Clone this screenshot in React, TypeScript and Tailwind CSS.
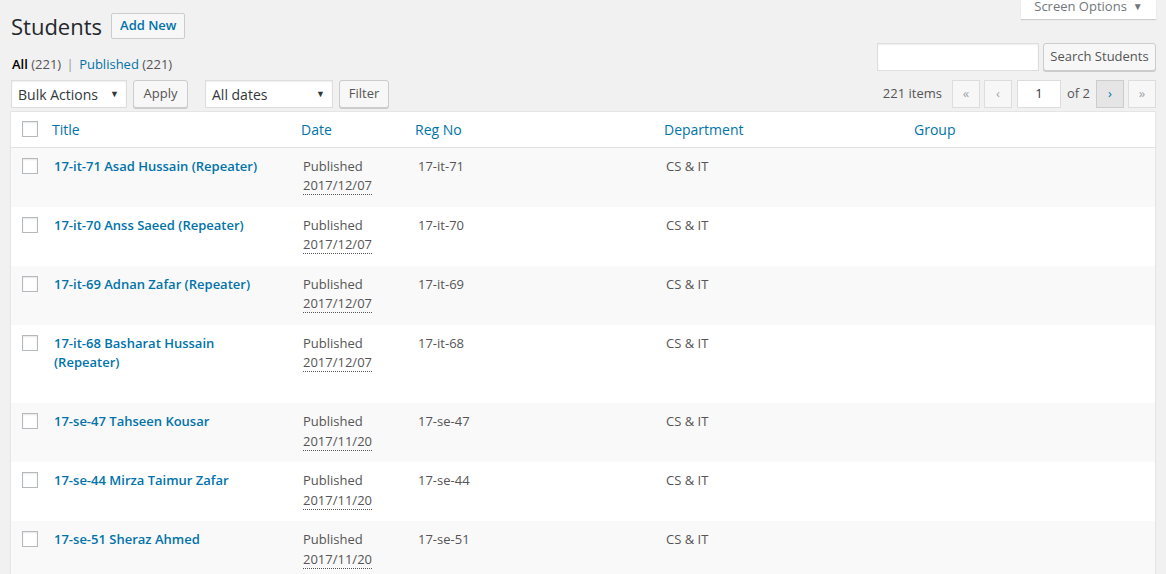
import React from "react";

const rows = [
  { title: "17-it-71 Asad Hussain (Repeater)", date: "2017/12/07", reg: "17-it-71" },
  { title: "17-it-70 Anss Saeed (Repeater)", date: "2017/12/07", reg: "17-it-70" },
  { title: "17-it-69 Adnan Zafar (Repeater)", date: "2017/12/07", reg: "17-it-69" },
  { title: "17-it-68 Basharat Hussain (Repeater)", date: "2017/12/07", reg: "17-it-68" },
  { title: "17-se-47 Tahseen Kousar", date: "2017/11/20", reg: "17-se-47" },
  { title: "17-se-44 Mirza Taimur Zafar", date: "2017/11/20", reg: "17-se-44" },
  { title: "17-se-51 Sheraz Ahmed", date: "2017/11/20", reg: "17-se-51" },
];

function Checkbox() {
  return (
    <span className="block w-4 h-4 bg-white border border-[#b4b9be] shadow-[inset_0_1px_2px_rgba(0,0,0,0.1)]" />
  );
}

function Select({ label, w }: { label: string; w: string }) {
  return (
    <div
      className={`${w} h-[28px] bg-white border border-[#ddd] shadow-[inset_0_1px_2px_rgba(0,0,0,0.07)] flex items-center justify-between pl-[6px] pr-[7px] text-[14px] text-[#32373c]`}
    >
      <span>{label}</span>
      <span className="text-[9px] text-[#32373c]">▼</span>
    </div>
  );
}

function Btn({ children, w }: { children: React.ReactNode; w: string }) {
  return (
    <div
      className={`${w} h-[28px] bg-[#f7f7f7] border border-[#ccc] rounded-[3px] shadow-[0_1px_0_#ccc] flex items-center justify-center text-[13px] text-[#555]`}
    >
      {children}
    </div>
  );
}

function PageBtn({ children, active }: { children: React.ReactNode; active?: boolean }) {
  return (
    <div
      className={
        active
          ? "w-[28px] h-[28px] bg-[#e5e5e5] border border-[#ccc] flex items-center justify-center text-[13px] text-[#0073aa]"
          : "w-[28px] h-[28px] bg-[#f7f7f7] border border-[#ddd] flex items-center justify-center text-[13px] text-[#a0a5aa]"
      }
    >
      {children}
    </div>
  );
}

export default function App() {
  return (
    <div
      className="min-h-[574px] bg-[#f1f1f1] text-[13px] text-[#444] overflow-hidden"
      style={{ fontFamily: '"Open Sans", "Noto Sans", sans-serif' }}
    >
      <div className="relative pl-[10px] pr-[10px]">
        {/* Screen options tab */}
        <div className="absolute right-[10px] top-0 w-[135px] h-[19px] bg-white shadow-[0_1px_1px_rgba(0,0,0,0.15)] flex items-start justify-center gap-[6px] text-[13px] text-[#72777c] leading-[14px]">
          <span className="-mt-[1px]">Screen Options</span>
          <span className="text-[10px] leading-[12px]">▼</span>
        </div>

        {/* Heading */}
        <div className="flex items-center gap-[8px] pt-[12px] h-[39px]">
          <h1 className="ml-[1px] text-[22px] font-normal text-[#23282d] leading-none mt-[1px]">Students</h1>
          <div className="ml-[1px] h-[26px] px-[8px] bg-[#f7f7f7] border border-[#ccc] rounded-[2px] flex items-center text-[13px] font-semibold text-[#0073aa]">
            Add New
          </div>
        </div>

        {/* subsubsub + search */}
        <div className="flex items-start justify-between h-[41px]">
          <div className="pl-[2px] pt-[19px] text-[13px] leading-none text-[#555]">
            <span className="text-black font-semibold">All</span> (221) <span className="text-[#999] mx-[2px]">|</span>{" "}
            <span className="text-[#0073aa]">Published</span> (221)
          </div>
          <div className="flex items-center gap-[4px] pt-[4px]">
            <div className="w-[162px] h-[28px] bg-white border border-[#ddd] shadow-[inset_0_1px_2px_rgba(0,0,0,0.07)]" />
            <Btn w="w-[113px]">Search Students</Btn>
          </div>
        </div>

        {/* tablenav */}
        <div className="flex items-center justify-between h-[28px]">
          <div className="flex items-center pl-[1px]">
            <Select label="Bulk Actions" w="w-[116px]" />
            <div className="ml-[6px]">
              <Btn w="w-[55px]">Apply</Btn>
            </div>
            <div className="ml-[17px]">
              <Select label="All dates" w="w-[128px]" />
            </div>
            <div className="ml-[6px]">
              <Btn w="w-[50px]">Filter</Btn>
            </div>
          </div>
          <div className="flex items-center text-[13px] text-[#555]">
            <span className="mr-[10px]">221 items</span>
            <PageBtn>«</PageBtn>
            <div className="ml-[4px]">
              <PageBtn>‹</PageBtn>
            </div>
            <div className="ml-[5px] w-[44px] h-[28px] bg-white border border-[#ddd] flex items-center justify-center text-[13px] text-[#32373c]">
              1
            </div>
            <span className="ml-[6px] mr-[6px]">of 2</span>
            <PageBtn active>›</PageBtn>
            <div className="ml-[4px]">
              <PageBtn>»</PageBtn>
            </div>
          </div>
        </div>

        {/* table */}
        <div className="mt-[3px] bg-white border border-[#e5e5e5] shadow-[0_1px_1px_rgba(0,0,0,0.04)]">
          <table className="w-full table-fixed border-collapse">
            <colgroup>
              <col className="w-[33px]" />
              <col className="w-[249px]" />
              <col className="w-[115px]" />
              <col className="w-[248px]" />
              <col className="w-[248px]" />
              <col />
            </colgroup>
            <thead>
              <tr className="h-[35px] border-b border-[#e1e1e1] text-left">
                <th className="pl-[11px] align-middle">
                  <Checkbox />
                </th>
                <th className="pl-[8px] font-normal text-[14px] text-[#0073aa]">Title</th>
                <th className="pl-[8px] font-normal text-[14px] text-[#0073aa]">Date</th>
                <th className="pl-[7px] font-normal text-[14px] text-[#0073aa]">Reg No</th>
                <th className="pl-[8px] font-normal text-[14px] text-[#0073aa]">Department</th>
                <th className="pl-[10px] font-normal text-[14px] text-[#0073aa]">Group</th>
              </tr>
            </thead>
            <tbody>
              {rows.map((r, i) => (
                <tr key={r.reg} className={i % 2 === 0 ? "bg-[#f9f9f9]" : "bg-white"}>
                  <td className="align-top pl-[11px] pt-[10px]">
                    <Checkbox />
                  </td>
                  <td className="align-top px-[10px] pt-[9px] pb-[7px]">
                    <div className="text-[13px] font-semibold text-[#0073aa] leading-[19.5px] pr-[12px]">
                      {r.title}
                    </div>
                    <div className="h-[23.5px]" />
                  </td>
                  <td className="align-top px-[10px] pt-[9px] text-[13px] text-[#555] leading-[19.5px]">
                    <div>Published</div>
                    <div>
                      <span className="border-b border-dotted border-[#555]">{r.date}</span>
                    </div>
                  </td>
                  <td className="align-top px-[10px] pt-[9px] text-[13px] text-[#555] leading-[19.5px]">{r.reg}</td>
                  <td className="align-top px-[10px] pt-[9px] text-[13px] text-[#555] leading-[19.5px]">CS &amp; IT</td>
                  <td className="align-top px-[10px] pt-[9px]" />
                </tr>
              ))}
            </tbody>
          </table>
        </div>
      </div>
    </div>
  );
}
